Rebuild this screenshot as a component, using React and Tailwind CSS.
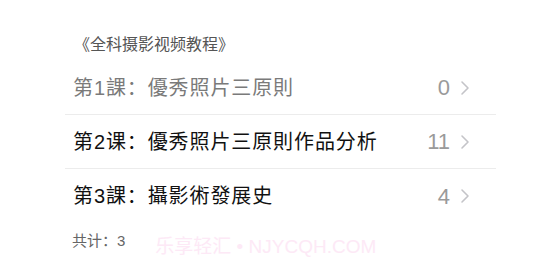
import React from "react";

const lessons = [
  { id: 1, title: "第1課：優秀照片三原則", count: 0, dim: true },
  { id: 2, title: "第2课：優秀照片三原則作品分析", count: 11 },
  { id: 3, title: "第3課：攝影術發展史", count: 4 },
];

const Chevron = () => (
  <svg width="10" height="16" viewBox="0 0 10 16" fill="none">
    <path d="M2 2l6 6-6 6" stroke="#c4c4c8" strokeWidth="1.6" strokeLinecap="round" strokeLinejoin="round" />
  </svg>
);

const App = () => {
  return (
    <div
      className="w-[541px] h-[274px] bg-white overflow-hidden relative"
      style={{ fontFamily: '"Liberation Sans", "Noto Sans CJK SC", sans-serif' }}
    >
      <div className="pt-[35px] pl-[74px] text-[16px] leading-[20px] text-[#555]">《全科摄影视频教程》</div>

      <div className="mt-[6px] ml-[65px] w-[431px]">
        {lessons.map((lesson, i) => (
          <div
            key={lesson.id}
            className={`flex items-center h-[54px] pl-[8px] ${i < lessons.length - 1 ? "border-b border-[#ececec]" : ""}`}
          >
            <span className={`flex-1 text-[20px] tracking-[0.9px] ${lesson.dim ? "text-[#7a7a7a]" : "text-[#111]"}`}>
              {lesson.title}
            </span>
            <span className="text-[22px] text-[#9a9a9a] mr-[10px]">{lesson.count}</span>
            <span className="mr-[26px] flex items-center">
              <Chevron />
            </span>
          </div>
        ))}
      </div>

      <div className="flex items-end mt-[1px] pl-[72px]">
        <span className="text-[15px] text-[#666]">共计：3</span>
        <span className="ml-[30px] text-[19px] text-[#fde9f6] translate-y-[9px]">乐享轻汇 • NJYCQH.COM</span>
      </div>
    </div>
  );
};

export default App;
